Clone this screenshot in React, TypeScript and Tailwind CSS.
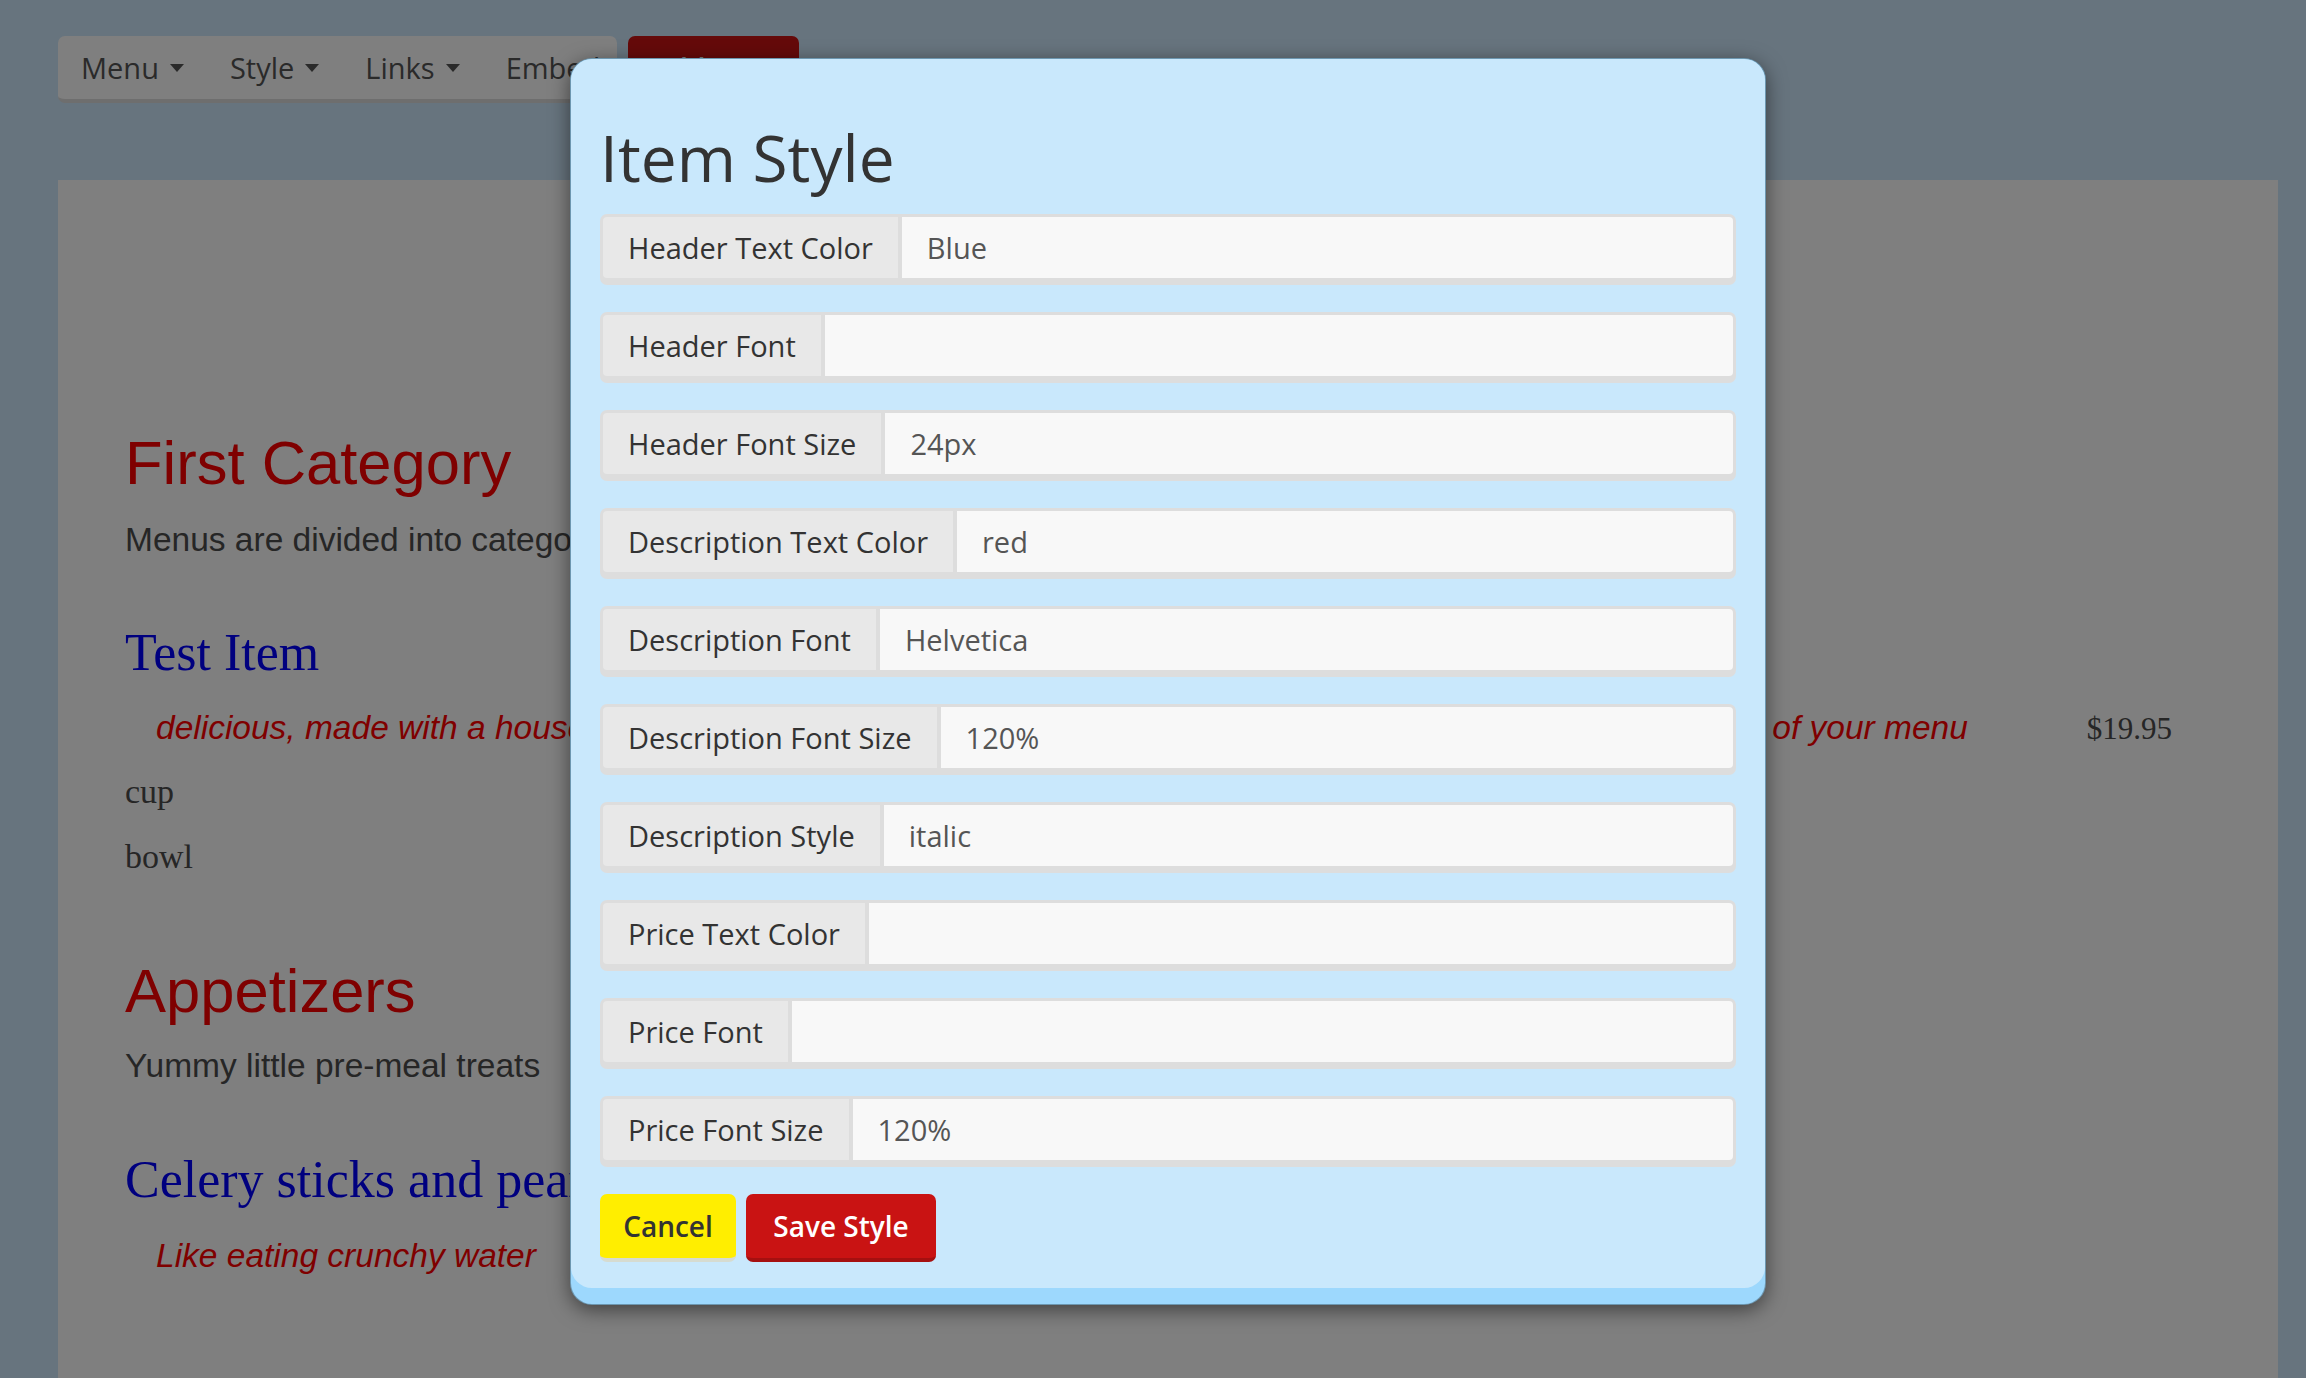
import React from 'react'

const fields = [
  { label: 'Header Text Color', value: 'Blue' },
  { label: 'Header Font', value: '' },
  { label: 'Header Font Size', value: '24px' },
  { label: 'Description Text Color', value: 'red' },
  { label: 'Description Font', value: 'Helvetica' },
  { label: 'Description Font Size', value: '120%' },
  { label: 'Description Style', value: 'italic' },
  { label: 'Price Text Color', value: '' },
  { label: 'Price Font', value: '' },
  { label: 'Price Font Size', value: '120%' },
]

function Caret() {
  return <span className="ml-[11px] inline-block h-0 w-0 border-x-[7px] border-t-[8px] border-x-transparent border-t-[#555]" />
}

function NavItem({ label, caret = true }: { label: string; caret?: boolean }) {
  return (
    <div className="flex items-center px-[23px] text-[29px] text-[#555]">
      {label}
      {caret && <Caret />}
    </div>
  )
}

function Field({ label, value }: { label: string; value: string }) {
  return (
    <div className="flex h-[71px] rounded-[7px] border-[3px] border-b-[7px] border-[#dddddd] bg-[#dddddd] text-[29px]">
      <div className="flex items-center rounded-l-[4px] bg-[#e8e8e8] px-[25px] text-[#333]">{label}</div>
      <div className="ml-[4px] flex flex-1 items-center rounded-r-[4px] bg-[#f8f8f8] px-[25px] text-[#555]">{value}</div>
    </div>
  )
}

export default function App() {
  return (
    <div className="relative h-[1378px] w-full overflow-hidden bg-[#cee8fc] font-['Open_Sans',sans-serif]">
      {/* nav */}
      <div className="flex gap-[11px] pl-[58px] pt-[36px]">
        <div className="flex h-[67px] w-[559px] items-center rounded-[7px] border-b-[4px] border-[#dcdcdc] bg-[#fefefe]">
          <NavItem label="Menu" />
          <NavItem label="Style" />
          <NavItem label="Links" />
          <NavItem label="Embed" caret={false} />
        </div>
        <button className="flex h-[67px] w-[171px] items-center justify-center rounded-[7px] border-b-[4px] border-[#a51010] bg-[#ca1414] text-[28px] font-semibold text-white">
          Add Item
        </button>
      </div>

      {/* menu preview */}
      <div className="ml-[58px] mt-[77px] h-[1300px] w-[2220px] bg-white pl-[67px] pr-[106px] pt-[252px]">
        <h2 className="font-['Liberation_Sans',Arial,sans-serif] text-[61.5px] leading-none text-[#ff0000]">First Category</h2>
        <p className="mt-[29px] font-['Liberation_Sans',Arial,sans-serif] text-[33.5px] leading-none text-[#4d4d4d]">
          Menus are divided into categories, like appetizers, entrees and desserts
        </p>

        <h3 className="mt-[71px] font-['Liberation_Serif',serif] text-[52px] leading-none text-[#0000ff]">Test Item</h3>
        <div className="mt-[32px] flex items-baseline pl-[31px]">
          <p className="flex-1 whitespace-nowrap font-['Liberation_Sans',Arial,sans-serif] text-[33.5px] italic leading-none text-[#ff0000]">
            delicious, made with a house-made stock and fresh vegetables; item descriptions all appear right in the body of your menu
          </p>
          <span className="font-['Liberation_Serif',serif] text-[31px] leading-none text-[#4d4d4d]">$19.95</span>
        </div>
        <p className="mt-[30px] font-['Liberation_Serif',serif] text-[34px] leading-none text-[#4d4d4d]">cup</p>
        <p className="mt-[31px] font-['Liberation_Serif',serif] text-[34px] leading-none text-[#4d4d4d]">bowl</p>

        <h2 className="mt-[86px] font-['Liberation_Sans',Arial,sans-serif] text-[61.5px] leading-none text-[#ff0000]">Appetizers</h2>
        <p className="mt-[28px] font-['Liberation_Sans',Arial,sans-serif] text-[33.5px] leading-none text-[#4d4d4d]">Yummy little pre-meal treats</p>

        <h3 className="mt-[71px] font-['Liberation_Serif',serif] text-[52px] leading-none text-[#0000ff]">Celery sticks and peanut butter</h3>
        <p className="mt-[33px] pl-[31px] font-['Liberation_Sans',Arial,sans-serif] text-[33.5px] italic leading-none text-[#ff0000]">
          Like eating crunchy water
        </p>
      </div>

      {/* backdrop */}
      <div className="absolute inset-0 bg-black/50" />

      {/* modal */}
      <div className="absolute left-[570px] top-[58px] w-[1196px] rounded-[22px] border border-black/30 bg-[#9dd8fd] pb-[16px] shadow-[0_5px_20px_rgba(0,0,0,0.5)]">
        <div className="rounded-[21px] bg-[#c9e8fc] px-[29px] pb-[26px] pt-[67px]">
          <h1 className="text-[64px] leading-none text-[#333]">Item Style</h1>
          <div className="mt-[24px] flex flex-col gap-[27px]">
            {fields.map((f) => (
              <Field key={f.label} label={f.label} value={f.value} />
            ))}
          </div>
          <div className="mt-[27px] flex gap-[10px]">
            <button className="h-[68px] w-[136px] rounded-[7px] border-b-[4px] border-[#d6dbd0] bg-[#ffee00] text-[28px] font-semibold text-[#333]">
              Cancel
            </button>
            <button className="h-[68px] w-[190px] rounded-[7px] border-b-[4px] border-[#a51010] bg-[#c91313] text-[28px] font-semibold text-white">
              Save Style
            </button>
          </div>
        </div>
      </div>
    </div>
  )
}
